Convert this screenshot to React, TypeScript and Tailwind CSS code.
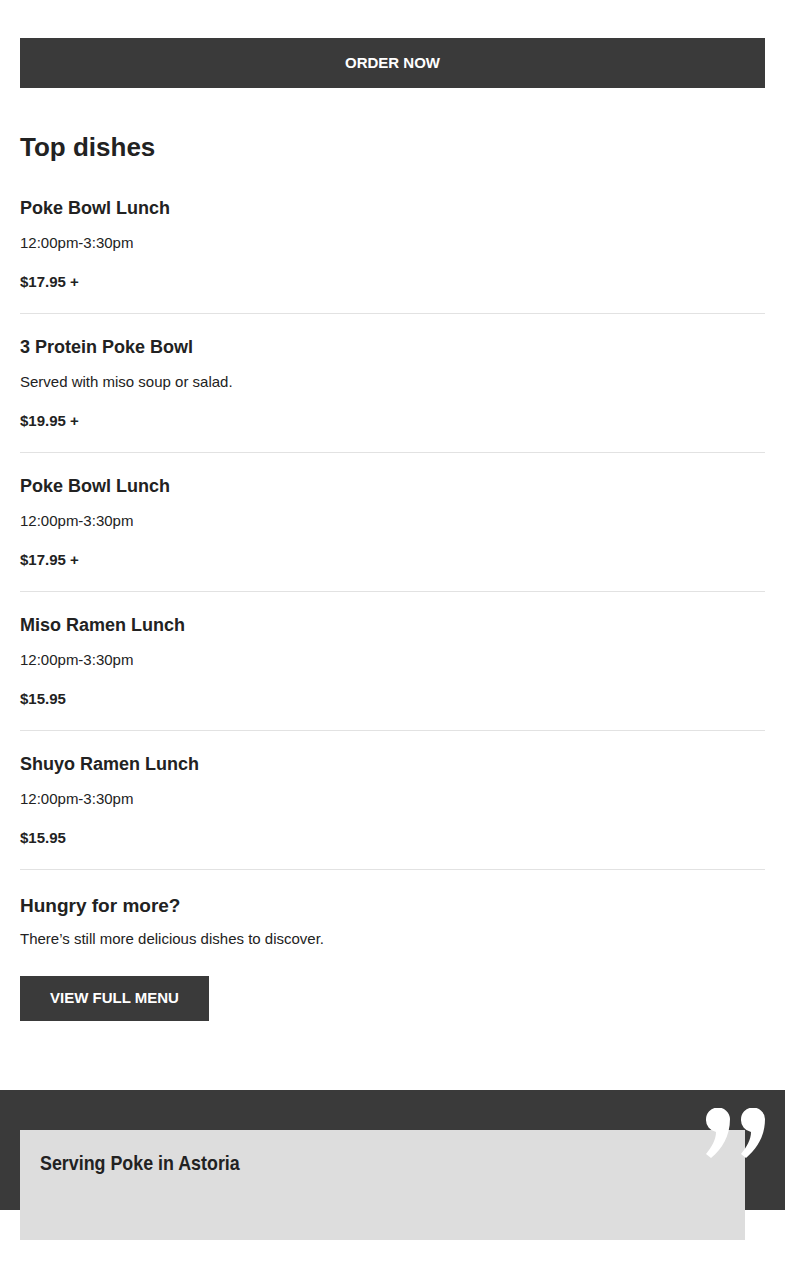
import React from 'react';

interface Dish {
  name: string;
  note: string;
  price: string;
}

const dishes: Dish[] = [
  { name: 'Poke Bowl Lunch', note: '12:00pm-3:30pm', price: '$17.95 +' },
  { name: '3 Protein Poke Bowl', note: 'Served with miso soup or salad.', price: '$19.95 +' },
  { name: 'Poke Bowl Lunch', note: '12:00pm-3:30pm', price: '$17.95 +' },
  { name: 'Miso Ramen Lunch', note: '12:00pm-3:30pm', price: '$15.95' },
  { name: 'Shuyo Ramen Lunch', note: '12:00pm-3:30pm', price: '$15.95' },
];

const QuoteMark: React.FC = () => (
  <svg width="60" height="50" viewBox="0 0 60 50" fill="#ffffff">
    <path d="M1 12 A12 12 0 0 1 25 11 C25 28 17 41 6 50 L1 46 C7 39 11 31 11 24 A12 12 0 0 1 1 12 Z" />
    <path d="M36 12 A12 12 0 0 1 60 11 C60 28 52 41 41 50 L36 46 C42 39 46 31 46 24 A12 12 0 0 1 36 12 Z" />
  </svg>
);

const DishRow: React.FC<{ dish: Dish; first: boolean }> = ({ dish, first }) => (
  <div className={`border-b border-[#e2e2e2] pb-[21px] ${first ? 'pt-0' : 'pt-[21px]'}`}>
    <h3 className="text-[18px] font-bold leading-6 text-[#222]">{dish.name}</h3>
    <p className="mt-[13px] text-[15px] leading-5 text-[#222]">{dish.note}</p>
    <p className="mt-[19px] text-[15px] font-bold leading-5 text-[#222]">{dish.price}</p>
  </div>
);

export default function App() {
  return (
    <div className="min-h-[1275px] bg-white font-['Liberation_Sans',Arial,sans-serif] text-[#222]">
      <div className="px-5 pt-[38px]">
        <button className="flex h-[50px] w-full items-center justify-center bg-[#3a3a3a] text-[15px] font-bold text-white">
          ORDER NOW
        </button>

        <h2 className="mt-[43px] text-[26px] font-bold leading-8">Top dishes</h2>

        <div className="mt-[33px]">
          {dishes.map((d, i) => (
            <DishRow key={i} dish={d} first={i === 0} />
          ))}
        </div>

        <h2 className="mt-6 text-[19px] font-bold leading-6">Hungry for more?</h2>
        <p className="mt-[11px] text-[15px] leading-5">There’s still more delicious dishes to discover.</p>
        <button className="mt-[27px] flex h-[45px] items-center bg-[#3a3a3a] px-[30px] text-[15px] font-bold text-white">
          VIEW FULL MENU
        </button>
      </div>

      {/* quote band: card hangs 30px below the dark strip */}
      <div className="relative mt-[69px] flow-root bg-[#3a3a3a] pt-10">
        <div className="absolute right-5 top-[18px] z-10">
          <QuoteMark />
        </div>
        <div className="relative -mb-[30px] ml-5 mr-10 h-[110px] bg-[#dddddd] px-5 pt-[21px]">
          <h3 className="inline-block origin-left scale-x-[0.85] text-[21px] font-bold leading-6 text-[#222]">
            Serving Poke in Astoria
          </h3>
        </div>
      </div>
    </div>
  );
}
